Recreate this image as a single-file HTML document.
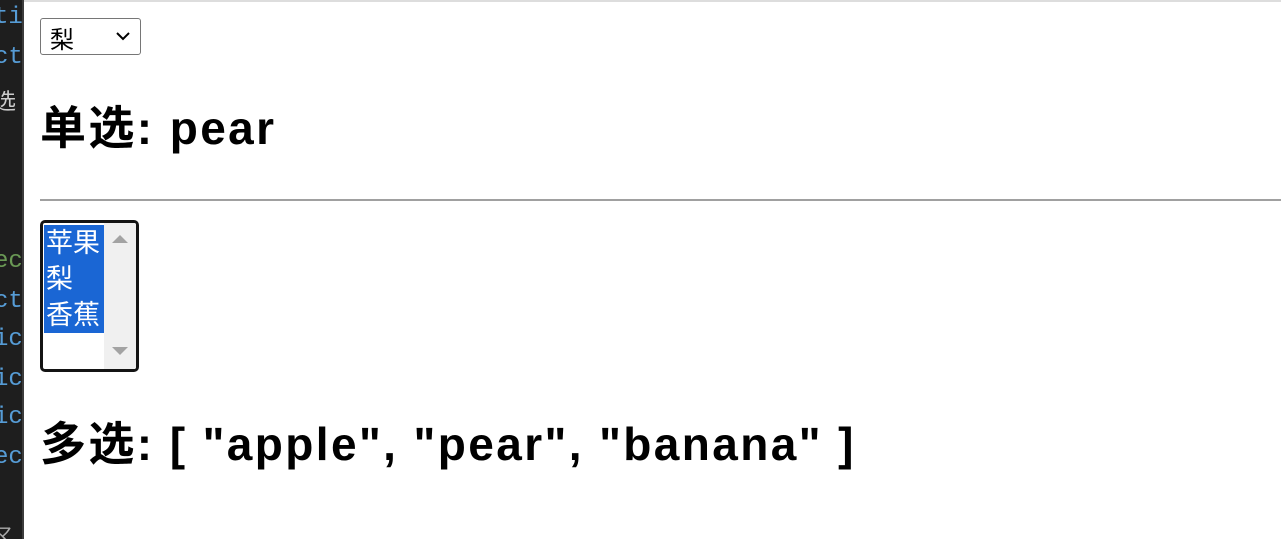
<!DOCTYPE html><html><head><meta charset="utf-8"><style>
body{margin:0;width:1281px;height:539px;overflow:hidden;background:#fff;font-family:"Liberation Sans","Noto Sans CJK SC",sans-serif;position:relative}
.strip{position:absolute;left:0;top:0;width:22px;height:539px;background:#1e1e1e;overflow:hidden;font-family:"Liberation Mono","Noto Sans CJK SC",monospace;font-size:24px}
.strip div{position:absolute;left:-6px;color:#569cd6}
.sep{position:absolute;left:22px;top:0;width:2px;height:539px;background:#3c3c3c}
.top{position:absolute;left:24px;top:0;right:0;height:2px;background:#ddd}
.sel{position:absolute;left:40px;top:18px;width:99px;height:35px;border:1px solid #767676;border-radius:3px;box-sizing:content-box;font-size:24px}
.sel span{position:absolute;left:9px;top:1px}
h2{position:absolute;margin:0;left:40px;font-size:46px;font-weight:bold;white-space:nowrap;letter-spacing:2.4px}
hr{position:absolute;left:40px;right:0;top:199px;margin:0;border:0;border-top:2px solid #a0a0a0}
.lb{position:absolute;left:40px;top:220px;width:93px;height:146px;border:3px solid #141414;border-radius:5px;overflow:hidden;font-size:27px}
.opt{position:absolute;left:1px;width:61px;background:#1a66d4;color:#fff;height:36px;line-height:36px;padding-left:2px;white-space:nowrap;overflow:hidden}
.sb{position:absolute;right:0;top:0;width:32px;height:100%;background:#f0f0f0}
</style></head><body>
<div class="strip">
<div style="top:4px">ti</div><div style="top:44px">ct</div><div style="top:84px;color:#ccc;font-size:22px">选</div>
<div style="top:248px;color:#6a9955">ec</div><div style="top:288px">ct</div><div style="top:326px">ic</div><div style="top:366px">ic</div><div style="top:404px">ic</div><div style="top:444px">ec</div><div style="top:520px;color:#aaa;font-size:18px">マ</div>
</div>
<div class="sep"></div><div class="top"></div>
<div class="sel"><span>梨</span><svg style="position:absolute;left:74px;top:11px" width="16" height="12"><path d="M2 3 L8 9 L14 3" fill="none" stroke="#000" stroke-width="2"/></svg></div>
<h2 style="top:92px">单选: pear</h2>
<hr>
<div class="lb">
<div class="opt" style="top:2px">苹果</div><div class="opt" style="top:38px">梨</div><div class="opt" style="top:74px;height:36px">香蕉</div>
<div class="sb"><svg width="32" height="146"><path d="M8 20 L16 12 L24 20Z" fill="#a3a3a3"/><path d="M8 124 L16 132 L24 124Z" fill="#a3a3a3"/></svg></div>
</div>
<h2 style="top:408px">多选: [ "apple", "pear", "banana" ]</h2>
</body></html>
